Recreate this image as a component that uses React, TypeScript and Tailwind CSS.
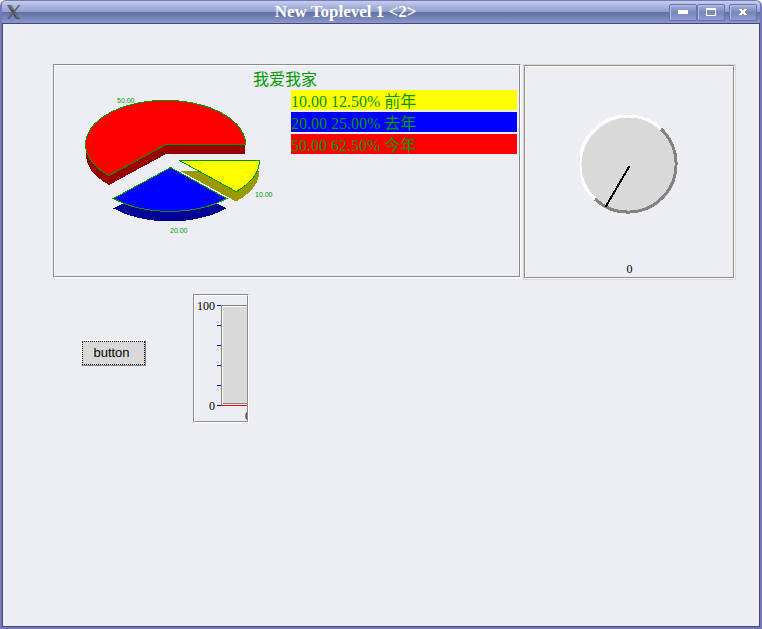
import type { ReactNode } from "react";

const SERIF = "font-['Liberation_Serif','Noto_Sans_CJK_SC',serif]";

function Groove({ className = "", children }: { className?: string; children: ReactNode }) {
  return (
    <div className={`flex border border-t-[#8c8c8c] border-r-white border-b-white border-l-[#8c8c8c] ${className}`}>
      <div className="flex min-w-0 flex-1 flex-col overflow-hidden border border-t-white border-r-[#8c8c8c] border-b-[#8c8c8c] border-l-white">
        {children}
      </div>
    </div>
  );
}

const slices = [
  { label: "10.00 12.50% 前年", bar: "bg-[#ffff00]" },
  { label: "20.00 25.00% 去年", bar: "bg-[#0000ff]" },
  { label: "50.00 62.50% 今年", bar: "bg-[#ff0000]" },
];

const RED = "M111 54.5 L190.5 54.5 A80 44 0 1 0 54 85.5 Z";
const YELLOW = "M124.5 70.5 L204.5 70.5 A80 44 0 0 1 181 101.5 Z";
const BLUE = "M115.5 77.5 L58.5 108.5 A80 44 0 0 0 171.5 108.5 Z";

function Pie() {
  return (
    <svg className="h-[186px] w-[236px] shrink-0" viewBox="0 0 236 186" role="img" aria-label="我爱我家">
      <g shapeRendering="crispEdges">
        <path d="M31 60 L31 64 A80 44 0 0 0 54 95 L111 64 L190 64 L190 54 L111 54 L31 56 Z" fill="#990000" />
        <path d={RED} fill="#ff0000" stroke="#009900" />
        <path d={YELLOW} fill="#999900" transform="translate(0 10)" />
        <path d={YELLOW} fill="#ffff00" stroke="#009900" />
        <path d={BLUE} fill="#000099" transform="translate(0 10)" />
        <path d={BLUE} fill="#0000ff" stroke="#009900" />
      </g>
      <g fill="#009900" fontSize="7" fontFamily="Liberation Sans, sans-serif">
        <text x="62" y="13">50.00</text>
        <text x="200" y="107">10.00</text>
        <text x="115" y="143">20.00</text>
      </g>
    </svg>
  );
}

function Dial() {
  return (
    <svg className="h-[102px] w-[100px]" viewBox="0 0 100 102" shapeRendering="crispEdges" role="img" aria-label="0">
      <circle cx="49.500" cy="50.500" r="48" fill="#d9d9d9" />
      <path d="M81 14 A48 48 0 0 1 15 84" fill="none" stroke="#828282" strokeWidth="3" />
      <path d="M15 84 A48 48 0 0 1 81 14" fill="none" stroke="#ffffff" strokeWidth="3" />
      <path d="M49.500 51 L25.500 92" stroke="#000000" strokeWidth="2" />
    </svg>
  );
}

function BarChart() {
  return (
    <svg className="h-[125px] w-[100px] shrink-0" viewBox="0 0 100 125" role="img" aria-label="0 - 100">
      <g shapeRendering="crispEdges">
        <rect x="26" y="9" width="74" height="100" fill="#828282" />
        <rect x="27" y="10" width="73" height="98" fill="#ffffff" />
        <rect x="28" y="11" width="72" height="96" fill="#d9d9d9" />
        <rect x="28" y="107" width="72" height="1" fill="#828282" />
        <rect x="27" y="108" width="73" height="1" fill="#eeeeee" />
        <rect x="26" y="109" width="74" height="1" fill="#ff0000" />
        {[9, 29, 49, 69, 89, 109].map((y) => (
          <rect key={y} x="22" y={y} width="4" height="1" fill="#0000ff" />
        ))}
      </g>
      <g fill="#000000" fontSize="12" fontFamily="Liberation Serif, serif">
        <text x="20" y="14" textAnchor="end">100</text>
        <text x="20" y="114" textAnchor="end">0</text>
        <text x="50" y="124">0</text>
      </g>
    </svg>
  );
}

function WindowButton({ label, className = "", children }: { label: string; className?: string; children: ReactNode }) {
  return (
    <button
      type="button"
      aria-label={label}
      className={`flex h-[17px] w-7 items-center justify-center rounded-xs border border-[#6873ad] bg-linear-to-b from-[#a9b3dc] via-[#7886bd] to-[#8f9ccf] shadow-[inset_1px_1px_0_#b4bce0] ${className}`}
    >
      <svg className="h-[10px] w-[14px]" viewBox="0 0 14 10" shapeRendering="crispEdges" aria-hidden="true">
        {children}
      </svg>
    </button>
  );
}

export default function App() {
  return (
    <div className="bg-white">
      <div className={`flex min-h-screen flex-col rounded-t-md border-2 border-t border-[#7579bb] bg-[#7579bb] text-base ${SERIF}`}>
        <header className="flex h-[22px] items-center rounded-t-sm bg-[linear-gradient(to_bottom,#c6cdec_0%,#8e9ccf_50%,#626f9f_51%,#8998cd_100%)] pr-[3px] pl-1">
          <svg className="h-4 w-4" viewBox="0 0 16 16" aria-hidden="true">
            <path d="M1 1h4l9 14h-4z" fill="#4c4f57" />
            <path d="M14.500 1h-2L1 15h2z" fill="#5b5e66" />
            <path d="M2 2h2l3 4M9 9l3 5" fill="none" stroke="#8d8c88" />
          </svg>
          <h1 className="flex-1 text-center text-[17px] leading-5 font-bold text-white">New Toplevel 1 &lt;2&gt;</h1>
          <WindowButton label="Minimize">
            <rect x="2" y="3" width="10" height="4" fill="#ffffff" />
          </WindowButton>
          <WindowButton label="Maximize">
            <path d="M2.500 1.500h9v7h-9zM2 2.500h10" fill="none" stroke="#ffffff" />
          </WindowButton>
          <WindowButton label="Close" className="ml-1">
            <path d="M3 2h3v1h2v-1h3v1h-1v1h-1v2h1v1h1v1h-3v-1h-2v1h-3v-1h1v-1h1v-2h-1v-1h-1z" fill="#ffffff" />
          </WindowButton>
        </header>

        <main className="flex-1 border border-[#45457c] bg-[#edeef3] pt-10 pr-[23px] pl-[50px]">
          <div className="flex items-start gap-[2px]">
            <Groove className="h-[214px] min-w-0 flex-1">
              <h2 className="h-6 pt-[2px] pr-1 text-center leading-6 text-[#009900]">我爱我家</h2>
              <div className="flex">
                <Pie />
                <ul className="flex min-w-0 flex-1 flex-col gap-[2px] pr-[2px]">
                  {slices.map((s) => (
                    <li key={s.label} className={`h-5 whitespace-nowrap leading-6 text-[#009900] ${s.bar}`}>
                      {s.label}
                    </li>
                  ))}
                </ul>
              </div>
            </Groove>

            <div className="w-[213px] shrink-0 border border-[#d9d9d9]">
              <Groove className="h-[214px]">
                <div className="flex flex-1 flex-col items-center justify-between pt-12">
                  <Dial />
                  <output className="text-xs leading-4">0</output>
                </div>
              </Groove>
            </div>
          </div>

          <div className="mt-[14px] flex items-start gap-[47px] pl-7">
            <button
              type="button"
              className="mt-[46px] h-[26px] w-[65px] border border-t-white border-r-[#828282] border-b-[#828282] border-l-white bg-[#d9d9d9] font-['Liberation_Sans',sans-serif] text-[13px] leading-5 text-black"
            >
              <span className="flex h-full items-center justify-center border border-dotted border-black pr-1">button</span>
            </button>
            <Groove className="h-[129px] w-14">
              <BarChart />
            </Groove>
          </div>
        </main>
      </div>
    </div>
  );
}
